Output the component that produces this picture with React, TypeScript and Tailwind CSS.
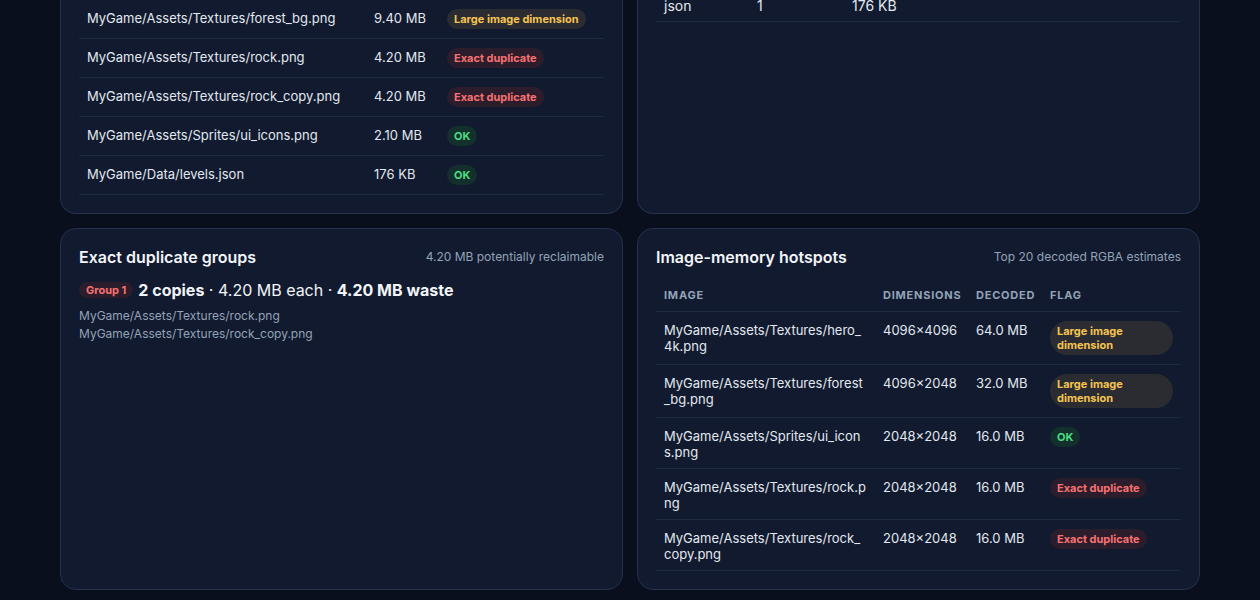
import React from 'react';

// --- Types ---
type Flag = 'large' | 'dup' | 'ok';
interface Asset { path: string; size: string; flag: Flag; }
interface Hotspot { path: string; dims: string; decoded: string; flag: Flag; }

const FLAG_LABEL: Record<Flag, string> = {
    large: 'Large image dimension',
    dup: 'Exact duplicate',
    ok: 'OK',
};

const FLAG_STYLE: Record<Flag, string> = {
    large: 'bg-[#2b2c31] text-[#f5c451]',
    dup: 'bg-[#2c1d2c] text-[#f87171]',
    ok: 'bg-[#13302c] text-[#4ade80]',
};

const assets: Asset[] = [
    { path: 'MyGame/Assets/Textures/forest_bg.png', size: '9.40 MB', flag: 'large' },
    { path: 'MyGame/Assets/Textures/rock.png', size: '4.20 MB', flag: 'dup' },
    { path: 'MyGame/Assets/Textures/rock_copy.png', size: '4.20 MB', flag: 'dup' },
    { path: 'MyGame/Assets/Sprites/ui_icons.png', size: '2.10 MB', flag: 'ok' },
    { path: 'MyGame/Data/levels.json', size: '176 KB', flag: 'ok' },
];

const hotspots: Hotspot[] = [
    { path: 'MyGame/Assets/Textures/hero_4k.png', dims: '4096×4096', decoded: '64.0 MB', flag: 'large' },
    { path: 'MyGame/Assets/Textures/forest_bg.png', dims: '4096×2048', decoded: '32.0 MB', flag: 'large' },
    { path: 'MyGame/Assets/Sprites/ui_icons.png', dims: '2048×2048', decoded: '16.0 MB', flag: 'ok' },
    { path: 'MyGame/Assets/Textures/rock.png', dims: '2048×2048', decoded: '16.0 MB', flag: 'dup' },
    { path: 'MyGame/Assets/Textures/rock_copy.png', dims: '2048×2048', decoded: '16.0 MB', flag: 'dup' },
];

const Badge = ({ flag, children }: { flag: Flag; children?: React.ReactNode }) => (
    <span className={`inline-block rounded-full px-[7px] py-[3px] text-[11px] font-bold leading-[14px] ${FLAG_STYLE[flag]}`}>
        {children ?? FLAG_LABEL[flag]}
    </span>
);

const App = () => {
    return (
        <div className="min-h-screen bg-[#0a0f1d] font-['Inter',sans-serif] text-[#e2e8f0]">
            <div className="max-w-[1140px] mx-auto pb-[10px] grid grid-cols-2 gap-[14px]">

                {/* --- Assets table (scrolled, top off screen) --- */}
                <div className="bg-[#111a2e] border-x border-b border-[#24314f] rounded-b-2xl px-[18px] pb-[18px]">
                    {assets.map(a => (
                        <div key={a.path} className="grid grid-cols-[287px_73px_1fr] border-b border-[#1e2a44] text-[13px] leading-4">
                            <div className="px-2 pt-[10px] pb-[12px]">{a.path}</div>
                            <div className="px-2 pt-[10px] pb-[12px]">{a.size}</div>
                            <div className="px-2 flex items-center">
                                <Badge flag={a.flag} />
                            </div>
                        </div>
                    ))}
                </div>

                {/* --- File types (scrolled) --- */}
                <div className="bg-[#111a2e] border-x border-b border-[#24314f] rounded-b-2xl px-[18px] pb-[18px]">
                    <div className="-mt-[10px] grid grid-cols-[93px_95px_131px_1fr] border-b border-[#1e2a44] text-sm leading-4">
                        <div className="px-2 pt-2 pb-[7px]">json</div>
                        <div className="px-2 pt-2 pb-[7px]">1</div>
                        <div className="px-2 pt-2 pb-[7px]">176 KB</div>
                        <div className="px-2 flex items-start">
                            <div className="w-full h-2 rounded bg-[#1e2a44] overflow-hidden">
                                <div className="h-full w-[2%] bg-[#60a5fa] rounded" />
                            </div>
                        </div>
                    </div>
                </div>

                {/* --- Exact duplicate groups --- */}
                <div className="bg-[#111a2e] border border-[#24314f] rounded-2xl p-[18px]">
                    <div className="flex items-center justify-between">
                        <h2 className="text-base font-semibold leading-5 text-[#f1f5f9]">Exact duplicate groups</h2>
                        <span className="text-xs text-[#94a3b8]">4.20 MB potentially reclaimable</span>
                    </div>
                    <div className="mt-3 flex items-center gap-[5px] leading-[22px] text-base text-[#f1f5f9]">
                        <span className="rounded-full px-[7px] py-px text-[11px] font-bold leading-[14px] bg-[#2c1d2c] text-[#f87171]">Group 1</span>
                        <span>
                            <b className="font-bold">2 copies</b> · 4.20 MB each · <b className="font-bold">4.20 MB waste</b>
                        </span>
                    </div>
                    <div className="mt-[6px] text-xs leading-[18px] text-[#94a3b8]">
                        <div>MyGame/Assets/Textures/rock.png</div>
                        <div>MyGame/Assets/Textures/rock_copy.png</div>
                    </div>
                </div>

                {/* --- Image-memory hotspots --- */}
                <div className="bg-[#111a2e] border border-[#24314f] rounded-2xl p-[18px]">
                    <div className="flex items-center justify-between">
                        <h2 className="text-base font-semibold leading-5 text-[#f1f5f9]">Image-memory hotspots</h2>
                        <span className="text-xs text-[#94a3b8]">Top 20 decoded RGBA estimates</span>
                    </div>
                    <div className="mt-3">
                        <div className="grid grid-cols-[219px_93px_74px_1fr] border-b border-[#1e2a44] text-[11px] font-bold uppercase tracking-[0.07em] leading-4 text-[#94a3b8]">
                            <div className="px-2 py-2">Image</div>
                            <div className="px-2 py-2">Dimensions</div>
                            <div className="px-2 py-2">Decoded</div>
                            <div className="px-2 py-2">Flag</div>
                        </div>
                        {hotspots.map(h => (
                            <div key={h.path} className="grid grid-cols-[219px_93px_74px_1fr] border-b border-[#1e2a44] text-[13px] leading-4">
                                <div className="px-2 pt-[10px] pb-[8px] break-all">{h.path}</div>
                                <div className="px-2 pt-[10px] pb-[8px]">{h.dims}</div>
                                <div className="px-2 pt-[10px] pb-[8px]">{h.decoded}</div>
                                <div className="px-2 pt-[9px] pb-[9px]">
                                    <Badge flag={h.flag} />
                                </div>
                            </div>
                        ))}
                    </div>
                </div>
            </div>
        </div>
    );
};

export default App;
